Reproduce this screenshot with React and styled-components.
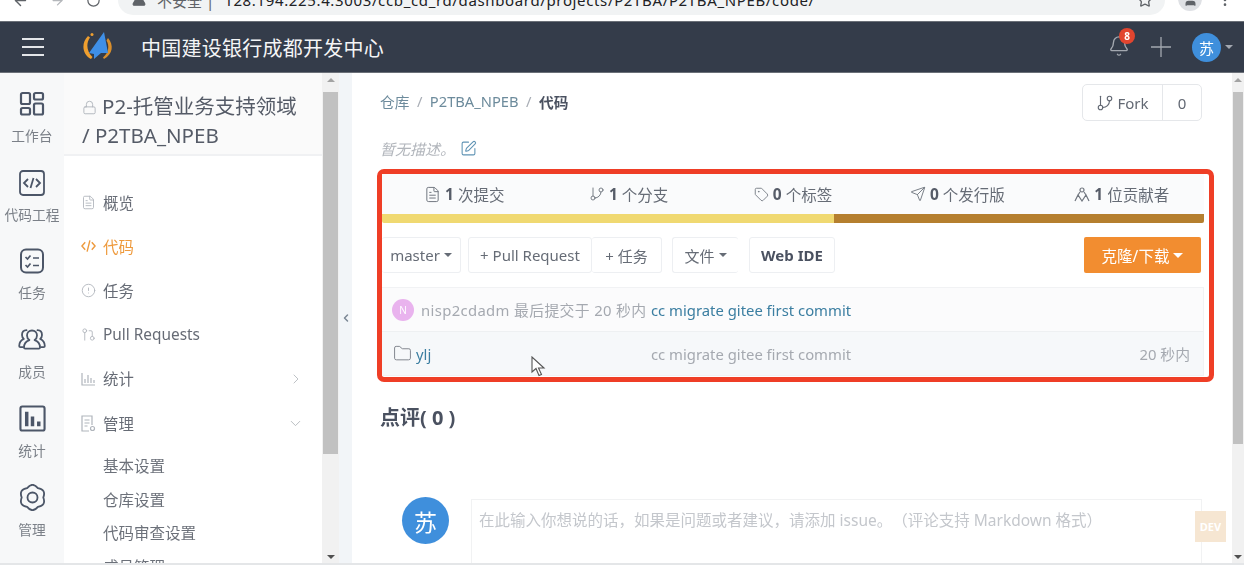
import React from "react";
import styled, { createGlobalStyle } from "styled-components";
import {
  AlertCircle,
  ArrowLeft,
  ArrowRight,
  Bell,
  ChevronDown,
  ChevronLeft,
  ChevronRight,
  FileText,
  Folder,
  GitBranch,
  GitPullRequest,
  Lock,
  MoreVertical,
  RotateCw,
  Send,
  SquarePen,
  Star,
  Tag,
  TriangleAlert,
  User,
} from "lucide-react";

const GlobalStyle = createGlobalStyle`
  html, body {
    margin: 0;
    padding: 0;
    background: #fff;
    overflow: hidden;
  }
  * { box-sizing: border-box; }
  body {
    font-family: "Noto Sans", "Noto Sans CJK SC", sans-serif;
    color: #4a5160;
  }
`;

const Page = styled.div`
  width: 1244px;
  height: 565px;
  display: flex;
  flex-direction: column;
  overflow: hidden;
  filter: blur(0.5px);
`;

const BrowserBar = styled.div`
  height: 21px;
  flex: none;
  display: flex;
  align-items: flex-end;
  padding: 0 0 6px 0;
  color: #5f6368;
  background: #fff;
  overflow: hidden;
`;

const NavIcons = styled.div`
  width: 118px;
  flex: none;
  height: 30px;
  display: flex;
  align-items: center;
  gap: 21px;
  padding-left: 12px;
`;

const AddressPill = styled.div`
  width: 1047px;
  height: 30px;
  flex: none;
  border-radius: 15px;
  background: #f1f3f4;
  display: flex;
  align-items: center;
  padding: 0 12px 0 14px;
  font-size: 15px;
  white-space: nowrap;
  svg:first-child {
    margin-right: 11px;
  }
`;

const Insecure = styled.span`
  color: #5f6368;
  margin-right: 10px;
`;

const Url = styled.span`
  color: #202124;
  letter-spacing: 0.64px;
  flex: 1;
`;

const ProfileDot = styled.div`
  width: 24px;
  height: 24px;
  flex: none;
  border-radius: 50%;
  background: #dfe1e5;
  margin: 0 0 4px 13px;
  color: #5f6368;
  display: flex;
  align-items: center;
  justify-content: center;
`;

const MoreDots = styled.div`
  margin: 0 0 7px 15px;
  display: flex;
`;

const TopBar = styled.header`
  height: 52px;
  flex: none;
  background: #343c4a;
  border-top: 1px solid #6b7078;
  border-bottom: 1px solid #6b7078;
  display: flex;
  align-items: center;
  padding-left: 22px;
  color: #fff;
`;

const Burger = styled.div`
  width: 22px;
  display: flex;
  flex-direction: column;
  gap: 6px;
  margin-right: 38px;
  span {
    height: 2px;
    background: #e4e6e9;
  }
`;

const BrandTitle = styled.div`
  font-size: 20px;
  letter-spacing: 0.25px;
  margin-left: 27px;
  color: #f4f5f6;
  flex: 1;
`;

const TopActions = styled.div`
  display: flex;
  align-items: center;
  color: #a3a8b0;
  padding-right: 11px;
`;

const BellWrap = styled.div`
  position: relative;
  width: 22px;
  height: 24px;
  margin-right: 21px;
`;

const Badge = styled.span`
  position: absolute;
  top: -7px;
  right: -5px;
  width: 16px;
  height: 16px;
  border-radius: 50%;
  background: #e2452f;
  color: #fff;
  font-size: 10px;
  font-weight: 700;
  line-height: 16px;
  text-align: center;
`;

const Avatar = styled.div`
  width: ${(p) => p.$size}px;
  height: ${(p) => p.$size}px;
  flex: none;
  margin-left: ${(p) => p.$gap || 0}px;
  border-radius: 50%;
  background: ${(p) => p.$bg};
  color: #fff;
  font-size: ${(p) => p.$font}px;
  display: flex;
  align-items: center;
  justify-content: center;
`;

const Caret = styled.span`
  display: inline-block;
  width: 0;
  height: 0;
  border-left: ${(p) => p.$size || 4}px solid transparent;
  border-right: ${(p) => p.$size || 4}px solid transparent;
  border-top: ${(p) => p.$size || 4}px solid ${(p) => p.$color || "currentColor"};
  margin-left: ${(p) => p.$gap || 4}px;
`;

const Body = styled.div`
  flex: 1;
  min-height: 0;
  display: flex;
  border-bottom: 2px solid #e4e6e8;
`;

const Rail = styled.nav`
  width: 64px;
  flex: none;
  background: #f7f8f9;
  padding-top: 18px;
  display: flex;
  flex-direction: column;
`;

const RailItem = styled.div`
  height: 78.6px;
  flex: none;
  display: flex;
  flex-direction: column;
  align-items: center;
  color: #4c5668;
  font-size: 13.75px;
  span {
    color: #7b8088;
    margin-top: 8px;
    white-space: nowrap;
  }
  svg {
    flex: none;
  }
`;

const SideMenu = styled.aside`
  width: 258px;
  flex: none;
  background: #fff;
  overflow: hidden;
`;

const RepoTitle = styled.div`
  height: 83px;
  background: #fafafa;
  border-bottom: 2px solid #f0f1f3;
  padding: 19px 10px 0 18px;
  font-size: 20.5px;
  line-height: 29px;
  color: #555b67;
  svg {
    color: #b0b5bc;
    margin-right: 5px;
    vertical-align: -1px;
  }
`;

const MenuList = styled.ul`
  list-style: none;
  margin: 0;
  padding: 24px 0 0 0;
`;

const MenuItem = styled.li`
  height: 44.2px;
  display: flex;
  align-items: center;
  padding: 0 18px 0 17px;
  font-size: 15.4px;
  color: ${(p) => (p.$active ? "#ee9a3d" : "#666b75")};
  svg.lead {
    color: ${(p) => (p.$active ? "#ee9a3d" : "#b0b5bc")};
    margin-right: 7px;
    flex: none;
  }
  svg.tail {
    color: #b4b8bd;
    margin-left: auto;
  }
`;

const SubList = styled.ul`
  list-style: none;
  margin: 0;
  padding: 4px 0 0 0;
`;

const SubItem = styled.li`
  height: 33.5px;
  padding-left: 39px;
  display: flex;
  align-items: center;
  font-size: 15.5px;
  color: #6c717a;
`;

const ScrollBar = styled.div`
  width: ${(p) => p.$width}px;
  flex: none;
  background: #f1f1f1;
  display: flex;
  flex-direction: column;
  align-items: center;
  padding-top: 5px;
`;

const ArrowUp = styled.span`
  width: 0;
  height: 0;
  border-left: 4px solid transparent;
  border-right: 4px solid transparent;
  border-bottom: 4px solid #a3a3a3;
`;

const ArrowDown = styled.span`
  width: 0;
  height: 0;
  border-left: 4px solid transparent;
  border-right: 4px solid transparent;
  border-top: 4px solid #505050;
  margin-top: auto;
  margin-bottom: 4px;
`;

const Thumb = styled.div`
  width: 100%;
  height: ${(p) => p.$height}px;
  margin-top: 10px;
  padding: 0 1px;
  &::before {
    content: "";
    display: block;
    height: 100%;
    background: #c1c1c1;
  }
`;

const CollapseStrip = styled.div`
  width: 13px;
  flex: none;
  background: #f2f5f8;
  display: flex;
  align-items: center;
  justify-content: center;
  color: #7b8794;
`;

const Main = styled.main`
  width: 880px;
  flex: none;
  background: #fff;
  position: relative;
  overflow: hidden;
  padding: 11px 12px 0 28px;
`;

const TopRow = styled.div`
  height: 37px;
  display: flex;
  align-items: center;
  justify-content: space-between;
  padding-right: 18px;
`;

const Crumbs = styled.div`
  display: flex;
  align-items: center;
  gap: 7.5px;
  font-size: 14.7px;
  padding-bottom: 3px;
  color: #6d8b9c;
  i {
    font-style: normal;
    color: #a8adb5;
  }
  b {
    color: #4a5160;
    font-weight: 700;
  }
`;

const ForkButton = styled.div`
  width: 120px;
  height: 37px;
  border: 1px solid #e5e7ea;
  border-radius: 5px;
  display: flex;
  font-size: 15px;
  color: #626873;
`;

const ForkLabel = styled.div`
  width: 80px;
  border-right: 1px solid #e5e7ea;
  display: flex;
  align-items: center;
  justify-content: center;
  gap: 3px;
`;

const ForkCount = styled.div`
  flex: 1;
  display: flex;
  align-items: center;
  justify-content: center;
`;

const Description = styled.div`
  height: 48px;
  display: flex;
  align-items: center;
  gap: 5px;
  padding-top: 6px;
  font-size: 15px;
  font-style: italic;
  color: #b1b5bb;
  svg {
    color: #5f93b4;
  }
`;

const Highlight = styled.section`
  width: 837px;
  height: 213px;
  margin-left: -3px;
  border: 5px solid #ef3e26;
  border-radius: 7px;
  padding-right: 5px;
  position: relative;
  background: #fff;
`;

const StatsRow = styled.div`
  height: 40px;
  display: grid;
  grid-template-columns: repeat(5, 1fr);
  background: #fafbfc;
`;

const Stat = styled.div`
  display: flex;
  align-items: center;
  justify-content: center;
  gap: 4px;
  font-size: 15.5px;
  color: #666c76;
  b {
    color: #565c68;
    font-weight: 700;
  }
  svg {
    color: #70767f;
  }
`;

const LangBar = styled.div`
  height: 9px;
  display: flex;
  border-radius: 0 0 2px 2px;
  overflow: hidden;
`;

const LangSegment = styled.div`
  flex: ${(p) => p.$grow};
  background: ${(p) => p.$color};
`;

const Toolbar = styled.div`
  height: 36px;
  margin-top: 14px;
  display: flex;
  padding-right: 3px;
`;

const ToolButton = styled.div`
  height: 36px;
  width: ${(p) => p.$width}px;
  margin-left: ${(p) => p.$gap || 0}px;
  flex: none;
  display: flex;
  align-items: center;
  justify-content: center;
  font-size: 15px;
  color: ${(p) => (p.$strong ? "#4a5160" : "#666c76")};
  font-weight: ${(p) => (p.$strong ? 700 : 400)};
  border: 1px solid #edeff2;
  border-left-width: ${(p) => (p.$openLeft ? 0 : 1)}px;
  border-right-width: ${(p) => (p.$openRight ? 0 : 1)}px;
  border-radius: 3px;
  white-space: nowrap;
`;

const CloneButton = styled.div`
  height: 36px;
  width: 117px;
  margin-left: auto;
  flex: none;
  background: #f28d30;
  color: #fff;
  font-size: 15.5px;
  border-radius: 2px;
  display: flex;
  align-items: center;
  justify-content: center;
`;

const FileTable = styled.div`
  margin-top: 14px;
  border: 1px solid #f1f2f4;
  border-left: 0;
  font-size: 14.85px;
`;

const CommitRow = styled.div`
  height: 44px;
  background: #fbfbfc;
  border-bottom: 1px solid #eef0f2;
  display: flex;
  align-items: center;
  padding-left: 10px;
  color: #a5a9b0;
  white-space: nowrap;
`;

const CommitText = styled.span`
  margin-left: 7px;
  width: 230px;
  letter-spacing: 0.35px;
`;

const CommitLink = styled.span`
  color: #3b7ea1;
`;

const FileRow = styled.div`
  height: 43px;
  background: #f6f8fa;
  display: flex;
  align-items: center;
  padding: 0 13px 0 11px;
  color: #a5a9b0;
  white-space: nowrap;
  svg {
    color: #7d828a;
    flex: none;
  }
`;

const FileName = styled.span`
  color: #3b7ea1;
  margin-left: 4px;
  width: 235px;
`;

const FileTime = styled.span`
  margin-left: auto;
`;

const Cursor = styled.svg`
  position: absolute;
  left: 149px;
  top: 182px;
`;

const CommentTitle = styled.h3`
  margin: 22px 0 0 0;
  height: 28px;
  font-size: 20px;
  line-height: 28px;
  font-weight: 700;
  color: #4a5160;
`;

const CommentRow = styled.div`
  display: flex;
  gap: 22px;
  padding: 65px 18px 0 22px;
`;

const CommentBox = styled.div`
  flex: 1;
  height: 90px;
  margin-top: 2px;
  border: 1px solid #f1f2f3;
  padding: 8px 7px;
  font-size: 15.5px;
  color: #c4c7cc;
  white-space: nowrap;
  text-spacing-trim: space-all;
`;

const DevBadge = styled.div`
  position: absolute;
  right: 6px;
  bottom: 21px;
  width: 31px;
  height: 31px;
  background: #f6e6d2;
  color: #fff;
  font-size: 11px;
  font-weight: 700;
  display: flex;
  align-items: center;
  justify-content: center;
`;

// six rounded lobes, top lobe pointing up
const gearPath = () => {
  const pt = (deg, r) => {
    const a = (deg * Math.PI) / 180;
    return `${(15 + r * Math.cos(a)).toFixed(2)} ${(15 + r * Math.sin(a)).toFixed(2)}`;
  };
  let d = `M${pt(-120, 11.2)}`;
  for (let i = 0; i < 6; i++) {
    d += ` Q${pt(-90 + i * 60, 16.6)} ${pt(-60 + i * 60, 11.2)}`;
  }
  return d + "Z";
};

const railIcons = {
  grid: (
    <svg width="28" height="26" viewBox="0 0 28 26" fill="none" stroke="currentColor" strokeWidth="2.2">
      <rect x="3" y="2" width="9" height="11" rx="1.5" />
      <rect x="16" y="2" width="9" height="6.5" rx="1.5" />
      <rect x="3" y="17" width="9" height="6.5" rx="1.5" />
      <rect x="16" y="12.5" width="9" height="11" rx="1.5" />
    </svg>
  ),
  code: (
    <svg width="28" height="26" viewBox="0 0 28 26" fill="none" stroke="currentColor" strokeWidth="1.8">
      <rect x="2" y="1" width="24" height="24" rx="3" />
      <path d="M10 9l-4 4 4 4M18 9l4 4-4 4M15.5 8l-3 10" />
    </svg>
  ),
  task: (
    <svg width="28" height="26" viewBox="0 0 28 26" fill="none" stroke="currentColor" strokeWidth="2">
      <rect x="3" y="1.5" width="22" height="23" rx="5" />
      <path d="M7.5 9l2 2 3-3.5M7.5 17l2 2 3-3.5M15 10h6M15 17.5h6" strokeWidth="1.7" />
    </svg>
  ),
  users: (
    <svg width="28" height="26" viewBox="0 0 28 26" fill="none" stroke="currentColor" strokeWidth="1.8" strokeLinejoin="round" strokeLinecap="round">
      <path d="M14 3.5c-3 0-5 2.3-5 5 0 2 1 3.6 2.4 4.6-3.2 1-5.4 3.6-5.4 7.4 0 .8.5 1.2 1.2 1.2h13.6c.7 0 1.2-.4 1.2-1.2 0-3.8-2.2-6.4-5.4-7.4 1.4-1 2.4-2.6 2.4-4.6 0-2.7-2-5-5-5z" />
      <path d="M8.5 3.2C5.8 3.4 4 5.4 4 8c0 1.6.7 3 1.8 3.9C3 13.2 1.2 15.6 1.2 19c0 .8.5 1.2 1.2 1.2H5" />
      <path d="M19.5 3.2C22.2 3.4 24 5.4 24 8c0 1.6-.7 3-1.8 3.9 2.8 1.3 4.6 3.7 4.6 7.1 0 .8-.5 1.2-1.2 1.2H23" />
    </svg>
  ),
  chart: (
    <svg width="27" height="27" viewBox="0 0 28 28" fill="none" stroke="currentColor">
      <rect x="1.5" y="1.5" width="25" height="25" rx="2" strokeWidth="2.2" />
      <path d="M8 7v15M14 12v10M20.5 17v5" strokeWidth="3.6" />
    </svg>
  ),
  gear: (
    <svg width="27" height="27" viewBox="1 1 28 28" fill="none" stroke="currentColor" strokeWidth="1.9" strokeLinejoin="round">
      <path d={gearPath()} />
      <circle cx="15" cy="15" r="5.2" />
    </svg>
  ),
};

function Logo() {
  return (
    <svg width="32" height="32" viewBox="0 0 32 32">
      <path d="M6 5C-1 12 0 23 9 28l1.5-2C5 21 3.5 13 8 6.5z" fill="#ef9f2f" />
      <path d="M26 7c6 7 5 16-4 21l-1-1.5c6-5 6.5-12 3.5-17z" fill="#d98f2c" />
      <path d="M22 1L7 22l5 1v5l7-6h7z" fill="#3f8fe6" />
      <circle cx="10" cy="3.5" r="1.5" fill="#ef9f2f" />
    </svg>
  );
}

function Rails() {
  const items = [
    ["grid", "工作台"],
    ["code", "代码工程"],
    ["task", "任务"],
    ["users", "成员"],
    ["chart", "统计"],
    ["gear", "管理"],
  ];
  return (
    <Rail>
      {items.map(([icon, label]) => (
        <RailItem key={label}>
          {railIcons[icon]}
          <span>{label}</span>
        </RailItem>
      ))}
    </Rail>
  );
}

function BarsIcon() {
  return (
    <svg className="lead" width="15" height="14" viewBox="0 0 15 14" fill="none" stroke="currentColor" strokeWidth="1.2">
      <path d="M1 1v12h13M4 11V7M7 11V3M10 11V6M13 11V8" />
    </svg>
  );
}

function CodeIcon() {
  return (
    <svg className="lead" width="15" height="14" viewBox="0 0 16 14" fill="none" stroke="currentColor" strokeWidth="1.5">
      <path d="M4.5 3L1 7l3.5 4M11.5 3L15 7l-3.5 4M9.5 1L6.5 13" />
    </svg>
  );
}

function ManageIcon() {
  return (
    <svg className="lead" width="15" height="17" viewBox="0 0 15 17" fill="none" stroke="currentColor" strokeWidth="1.2">
      <path d="M8 16H1V1h10v9M3.5 5h5M3.5 8h5M3.5 11h3" />
      <circle cx="11.5" cy="13.5" r="2" />
    </svg>
  );
}

function ContributorsIcon() {
  return (
    <svg width="16" height="15" viewBox="0 0 16 15" fill="none" stroke="currentColor" strokeWidth="1.2">
      <circle cx="8" cy="3" r="2" />
      <path d="M1 14l3-6 4 6 4-6 3 6M6 5L4 8M10 5l2 3" />
    </svg>
  );
}

function PlusIcon() {
  return (
    <svg width="20" height="20" viewBox="0 0 20 20" stroke="currentColor" strokeWidth="1.3">
      <path d="M10 0v20M0 10h20" />
    </svg>
  );
}

export default function App() {
  return (
    <Page>
      <GlobalStyle />
      <BrowserBar>
        <NavIcons>
          <ArrowLeft size={17} />
          <ArrowRight size={15} color="#b4b7bb" />
          <RotateCw size={15} />
        </NavIcons>
        <AddressPill>
          <TriangleAlert size={14} fill="#5f6368" />
          <Insecure>不安全 |</Insecure>
          <Url>128.194.225.4:3003/ccb_cd_rd/dashboard/projects/P2TBA/P2TBA_NPEB/code/</Url>
          <Star size={16} />
        </AddressPill>
        <ProfileDot>
          <User size={15} fill="#5f6368" />
        </ProfileDot>
        <MoreDots>
          <MoreVertical size={16} />
        </MoreDots>
      </BrowserBar>

      <TopBar>
        <Burger>
          <span />
          <span />
          <span />
        </Burger>
        <Logo />
        <BrandTitle>中国建设银行成都开发中心</BrandTitle>
        <TopActions>
          <BellWrap>
            <Bell size={22} strokeWidth={1.5} />
            <Badge>8</Badge>
          </BellWrap>
          <PlusIcon />
          <Avatar $size={29} $bg="#3f8fdc" $font={15} $gap={21}>
            苏
          </Avatar>
          <Caret $color="#a3a8b0" $gap={4} />
        </TopActions>
      </TopBar>

      <Body>
        <Rails />
        <SideMenu>
          <RepoTitle>
            <Lock size={15} strokeWidth={1.5} />
            P2-托管业务支持领域
            <br />/ P2TBA_NPEB
          </RepoTitle>
          <MenuList>
            <MenuItem>
              <FileText className="lead" size={15} strokeWidth={1.4} />
              概览
            </MenuItem>
            <MenuItem $active>
              <CodeIcon />
              代码
            </MenuItem>
            <MenuItem>
              <AlertCircle className="lead" size={15} strokeWidth={1.4} />
              任务
            </MenuItem>
            <MenuItem>
              <GitPullRequest className="lead" size={15} strokeWidth={1.4} />
              Pull Requests
            </MenuItem>
            <MenuItem>
              <BarsIcon />
              统计
              <ChevronRight className="tail" size={16} strokeWidth={1.3} />
            </MenuItem>
            <MenuItem>
              <ManageIcon />
              管理
              <ChevronDown className="tail" size={17} strokeWidth={1.3} />
            </MenuItem>
          </MenuList>
          <SubList>
            <SubItem>基本设置</SubItem>
            <SubItem>仓库设置</SubItem>
            <SubItem>代码审查设置</SubItem>
            <SubItem>成员管理</SubItem>
          </SubList>
        </SideMenu>
        <ScrollBar $width={17}>
          <ArrowUp />
          <Thumb $height={362} />
          <ArrowDown />
        </ScrollBar>
        <CollapseStrip>
          <ChevronLeft size={12} strokeWidth={3} />
        </CollapseStrip>

        <Main>
          <TopRow>
            <Crumbs>
              仓库 <i>/</i> P2TBA_NPEB <i>/</i> <b>代码</b>
            </Crumbs>
            <ForkButton>
              <ForkLabel>
                <GitBranch size={18} strokeWidth={1.5} />
                Fork
              </ForkLabel>
              <ForkCount>0</ForkCount>
            </ForkButton>
          </TopRow>
          <Description>
            暂无描述。
            <SquarePen size={17} strokeWidth={1.5} />
          </Description>
          <Highlight>
            <StatsRow>
              <Stat>
                <FileText size={17} strokeWidth={1.4} />
                <b>1</b> 次提交
              </Stat>
              <Stat>
                <GitBranch size={16} strokeWidth={1.4} />
                <b>1</b> 个分支
              </Stat>
              <Stat>
                <Tag size={15} strokeWidth={1.4} />
                <b>0</b> 个标签
              </Stat>
              <Stat>
                <Send size={16} strokeWidth={1.4} />
                <b>0</b> 个发行版
              </Stat>
              <Stat>
                <ContributorsIcon />
                <b>1</b> 位贡献者
              </Stat>
            </StatsRow>
            <LangBar>
              <LangSegment $grow={452} $color="#f0d971" />
              <LangSegment $grow={370} $color="#b57f2f" />
            </LangBar>
            <Toolbar>
              <ToolButton $width={79} $openLeft>
                master
                <Caret $size={4} />
              </ToolButton>
              <ToolButton $width={124} $gap={7}>
                + Pull Request
              </ToolButton>
              <ToolButton $width={70} $openLeft>
                + 任务
              </ToolButton>
              <ToolButton $width={66} $gap={10} $openRight>
                文件
                <Caret $size={4} />
              </ToolButton>
              <ToolButton $width={86} $gap={11} $strong>
                Web IDE
              </ToolButton>
              <CloneButton>
                克隆/下载
                <Caret $size={5} $color="#fff" />
              </CloneButton>
            </Toolbar>
            <FileTable>
              <CommitRow>
                <Avatar $size={22} $bg="#e9b3ee" $font={10}>
                  N
                </Avatar>
                <CommitText>nisp2cdadm 最后提交于 20 秒内</CommitText>
                <CommitLink>cc migrate gitee first commit</CommitLink>
              </CommitRow>
              <FileRow>
                <Folder size={19} strokeWidth={1.2} />
                <FileName>ylj</FileName>
                cc migrate gitee first commit
                <FileTime>20 秒内</FileTime>
              </FileRow>
            </FileTable>
            <Cursor width="16" height="21" viewBox="0 0 16 21">
              <path d="M1 1v15l4-3.5 3 7 2.5-1-3-6.5H13z" fill="#fff" stroke="#555" strokeWidth="1.1" />
            </Cursor>
          </Highlight>
          <CommentTitle>点评( 0 )</CommentTitle>
          <CommentRow>
            <Avatar $size={47} $bg="#3f8fdc" $font={23}>
              苏
            </Avatar>
            <CommentBox>在此输入你想说的话，如果是问题或者建议，请添加 issue。（评论支持 Markdown 格式）</CommentBox>
          </CommentRow>
          <DevBadge>DEV</DevBadge>
        </Main>
        <ScrollBar $width={12}>
          <ArrowUp />
          <Thumb $height={352} />
          <ArrowDown />
        </ScrollBar>
      </Body>
    </Page>
  );
}
